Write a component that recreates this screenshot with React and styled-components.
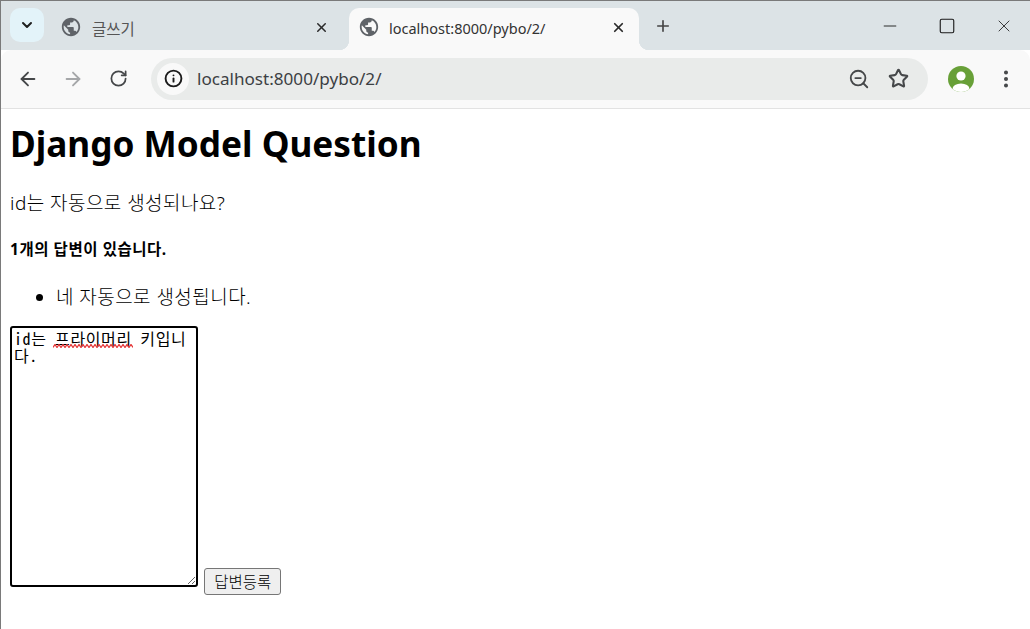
import React from "react";
import styled, { createGlobalStyle } from "styled-components";
import { ArrowLeft, ArrowRight, RotateCw, Info, ZoomOut, Star, X, Plus, ChevronDown, Minus, Square, EllipsisVertical } from "lucide-react";

const Global = createGlobalStyle`
  html, body { margin: 0; padding: 0; background: #fff; }
  body { font-family: "Noto Sans", "Noto Sans CJK KR", sans-serif; color: #000; }
`;

const Windowed = styled.div`
  width: 1030px;
  height: 629px;
  box-sizing: border-box;
  border-left: 1px solid #7a7a7a;
  border-top: 1px solid #7a7a7a;
  overflow: hidden;
  display: flex;
  flex-direction: column;
`;

const TabStrip = styled.div`
  height: 49px;
  flex: none;
  background: #dce3e6;
  display: flex;
  align-items: flex-start;
  padding: 7px 16px 0 9px;
  box-sizing: border-box;
`;

const TabMenu = styled.div`
  width: 34px;
  height: 34px;
  border-radius: 10px;
  background: #e3f3f9;
  display: flex;
  align-items: center;
  justify-content: center;
  color: #1f1f1f;
  margin-right: 7px;
`;

const Tab = styled.div`
  position: relative;
  width: ${(p) => (p.$active ? 290 : 291)}px;
  height: 42px;
  box-sizing: border-box;
  padding: 0 13px 2px 9px;
  margin-right: 7px;
  display: flex;
  align-items: center;
  gap: ${(p) => (p.$active ? 9 : 10)}px;
  border-radius: 10px 10px 0 0;
  background: ${(p) => (p.$active ? "#f9f9f9" : "transparent")};
  color: ${(p) => (p.$active ? "#333" : "#555")};
  font-size: ${(p) => (p.$active ? 14.5 : 15.5)}px;
  font-weight: 400;

  ${(p) =>
    p.$active &&
    `
    &::before, &::after {
      content: "";
      position: absolute;
      bottom: 0;
      width: 10px;
      height: 10px;
    }
    &::before { left: -10px; background: radial-gradient(circle at 0 0, transparent 10px, #f9f9f9 10.5px); }
    &::after { right: -10px; background: radial-gradient(circle at 100% 0, transparent 10px, #f9f9f9 10.5px); }
  `}
`;

const TabTitle = styled.span`
  flex: 1;
  white-space: nowrap;
`;

const TabIcon = styled.svg`
  width: 22px;
  height: 22px;
  flex: none;
  fill: #5f6368;
  margin-top: -3px;
`;

const TabClose = styled.div`
  display: flex;
  color: #2a2a2a;
  margin-top: -2px;
`;

const NewTab = styled.div`
  display: flex;
  color: #444;
  margin: 9px 0 0 8px;
`;

const WindowControls = styled.div`
  margin-left: auto;
  display: flex;
  gap: 37px;
  padding-top: 7px;
  color: #1a1a1a;
`;

const WindowButton = styled.div`
  width: 20px;
  height: 22px;
  display: flex;
  align-items: center;
  justify-content: center;
`;

const Toolbar = styled.div`
  height: 59px;
  flex: none;
  box-sizing: border-box;
  background: #f9f9f9;
  border-bottom: 1px solid #e2e2e2;
  border-radius: 10px 10px 0 0;
  display: flex;
  align-items: center;
  padding: 0 11px 1px 15px;
  position: relative;
`;

const NavButton = styled.div`
  width: 24px;
  height: 24px;
  display: flex;
  align-items: center;
  justify-content: center;
  margin-right: 21px;
  color: ${(p) => (p.$disabled ? "#a5a7a9" : "#454749")};
`;

const Omnibox = styled.div`
  width: 777px;
  height: 42px;
  border-radius: 21px;
  background: #e9ebea;
  display: flex;
  align-items: center;
  padding: 0 19px 0 6px;
  box-sizing: border-box;
`;

const SiteInfo = styled.div`
  width: 32px;
  height: 32px;
  border-radius: 50%;
  background: #f9f9f9;
  display: flex;
  align-items: center;
  justify-content: center;
  color: #1a1a1a;
  margin-right: 8px;
`;

const Url = styled.span`
  flex: 1;
  font-size: 17.1px;
  color: #3c4043;
`;

const OmniAction = styled.div`
  display: flex;
  color: #454749;
  margin-left: 18px;
`;

const Avatar = styled.svg`
  width: 26px;
  height: 26px;
  margin-left: 20px;
`;

const Kebab = styled.div`
  display: flex;
  color: #454749;
  margin-left: 21px;
`;

const Page = styled.main`
  flex: 1;
  padding: 10px 9px;
  background: #fff;
`;

const Title = styled.h1`
  font-size: 35.2px;
  font-weight: 700;
  line-height: 48px;
  margin: 0 0 23px;
`;

const Subject = styled.p`
  font-size: 19px;
  font-weight: 300;
  letter-spacing: 0.45px;
  line-height: 26px;
  margin: 0 0 23px;
  color: #000;
`;

const Count = styled.h5`
  font-size: 15.5px;
  font-weight: 700;
  letter-spacing: 0.55px;
  line-height: 20px;
  margin: 0 0 25px;
`;

const Answers = styled.ul`
  margin: 0 0 16px;
  padding: 0 0 0 46px;
  font-size: 19px;
  font-weight: 300;
  letter-spacing: 0.45px;
  line-height: 26px;
`;

const Form = styled.form`
  display: block;
`;

const Field = styled.span`
  display: inline-block;
  position: relative;
`;

const Area = styled.textarea`
  display: inline-block;
  width: 188px;
  height: 261px;
  box-sizing: border-box;
  border: 2px solid #000;
  border-radius: 3px;
  outline: none;
  padding: 2px;
  margin: 0;
  font-family: "Noto Sans Mono CJK KR", "Noto Sans CJK KR", monospace;
  font-size: 16px;
  font-weight: 300;
  letter-spacing: 0.6px;
  line-height: 17px;
  color: #000;
  background: #fff;
`;

const Squiggle = styled.svg`
  position: absolute;
  left: 43px;
  top: 18px;
  width: 80px;
  height: 4px;
  fill: none;
  stroke: #e5393a;
  stroke-width: 1.3;
`;

const Submit = styled.button`
  font-family: "Noto Sans CJK KR", sans-serif;
  font-size: 15.5px;
  font-weight: 300;
  height: 27px;
  width: 77px;
  padding: 0;
  margin-left: 2px;
  vertical-align: -1px;
  border: 1px solid #767676;
  border-radius: 3px;
  background: #efefef;
  color: #000;
`;

const globe =
  "M12 2C6.48 2 2 6.48 2 12s4.48 10 10 10 10-4.48 10-10S17.52 2 12 2zm-1 17.93c-3.95-.49-7-3.85-7-7.93 0-.62.08-1.21.21-1.79L9 15v1c0 1.1.9 2 2 2v1.93zm6.9-2.54c-.26-.81-1-1.39-1.9-1.39h-1v-3c0-.55-.45-1-1-1H8v-2h2c.55 0 1-.45 1-1V7h2c1.1 0 2-.9 2-2v-.41c2.93 1.19 5 4.06 5 7.41 0 2.08-.8 3.97-2.1 5.39z";

const squigglePath = Array.from({ length: 41 }, (_, i) => `${i === 0 ? "M" : "L"}${i * 2} ${i % 2 ? 0.5 : 3.5}`).join(" ");

export default function App() {
  return (
    <Windowed>
      <Global />
      <TabStrip>
        <TabMenu>
          <ChevronDown size={16} strokeWidth={3} />
        </TabMenu>
        <Tab>
          <TabIcon viewBox="0 0 24 24"><path d={globe} /></TabIcon>
          <TabTitle>글쓰기</TabTitle>
          <TabClose><X size={15} strokeWidth={2.4} /></TabClose>
        </Tab>
        <Tab $active>
          <TabIcon viewBox="0 0 24 24"><path d={globe} /></TabIcon>
          <TabTitle>localhost:8000/pybo/2/</TabTitle>
          <TabClose><X size={15} strokeWidth={2.8} /></TabClose>
        </Tab>
        <NewTab><Plus size={18} strokeWidth={2.2} /></NewTab>
        <WindowControls>
          <WindowButton><Minus size={22} strokeWidth={1.1} /></WindowButton>
          <WindowButton><Square size={18} strokeWidth={1.5} /></WindowButton>
          <WindowButton><X size={26} strokeWidth={1} /></WindowButton>
        </WindowControls>
      </TabStrip>
      <Toolbar>
        <NavButton><ArrowLeft size={22} strokeWidth={2} /></NavButton>
        <NavButton $disabled><ArrowRight size={22} strokeWidth={2} /></NavButton>
        <NavButton><RotateCw size={19} strokeWidth={2.2} /></NavButton>
        <Omnibox>
          <SiteInfo><Info size={19} strokeWidth={2.4} /></SiteInfo>
          <Url>localhost:8000/pybo/2/</Url>
          <OmniAction><ZoomOut size={22} strokeWidth={2} /></OmniAction>
          <OmniAction><Star size={21} strokeWidth={2.4} /></OmniAction>
        </Omnibox>
        <Avatar viewBox="0 0 26 26">
          <defs>
            <clipPath id="avatarClip"><circle cx="13" cy="13" r="13" /></clipPath>
          </defs>
          <g clipPath="url(#avatarClip)">
            <rect width="26" height="26" fill="#68a038" />
            <circle cx="13" cy="10" r="4.6" fill="#fff" />
            <ellipse cx="13" cy="23" rx="8.5" ry="5.5" fill="#fff" />
          </g>
        </Avatar>
        <Kebab><EllipsisVertical size={22} strokeWidth={2.4} /></Kebab>
      </Toolbar>
      <Page>
        <Title>Django Model Question</Title>
        <Subject>id는 자동으로 생성되나요?</Subject>
        <Count>1개의 답변이 있습니다.</Count>
        <Answers>
          <li>네 자동으로 생성됩니다.</li>
        </Answers>
        <Form>
          <Field>
            <Area spellCheck={false} defaultValue="id는 프라이머리 키입니다." />
            <Squiggle viewBox="0 0 80 4"><path d={squigglePath} /></Squiggle>
          </Field>
          {" "}
          <Submit type="button">답변등록</Submit>
        </Form>
      </Page>
    </Windowed>
  );
}
